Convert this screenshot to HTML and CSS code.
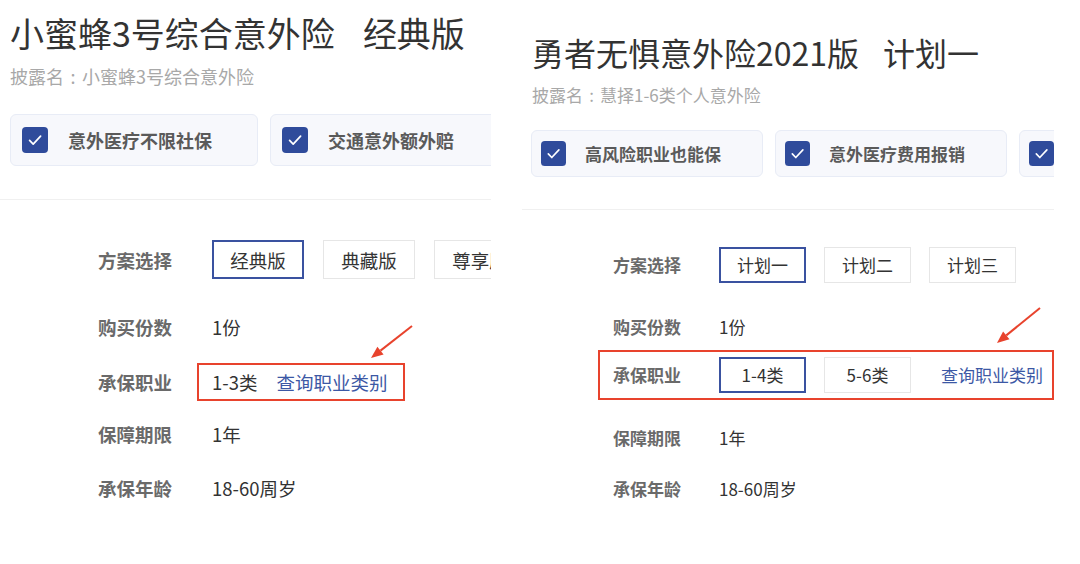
FILE: index.html
```html
<!DOCTYPE html>
<html lang="zh-CN">
<head>
<meta charset="utf-8">
<title>意外险方案对比</title>
<link rel="stylesheet" href="styles.css">
</head>
<body>
<div class="page">
  <section class="panel panel--a">
    <div class="head">
      <h1 class="title">小蜜蜂3号综合意外险<span class="title-plan">经典版</span></h1>
      <p class="disclose">披露名<span class="colon">:</span>小蜜蜂3号综合意外险</p>
      <div class="tags">
        <div class="tag">
          <span class="check"><svg viewBox="0 0 26 26"><rect width="26" height="26" rx="4"/><path d="M7.6 13.4 L11.2 17.2 L18.6 9.2"/></svg></span>
          <span class="tag-text">意外医疗不限社保</span>
        </div>
        <div class="tag">
          <span class="check"><svg viewBox="0 0 26 26"><rect width="26" height="26" rx="4"/><path d="M7.6 13.4 L11.2 17.2 L18.6 9.2"/></svg></span>
          <span class="tag-text">交通意外额外赔</span>
        </div>
      </div>
    </div>
    <div class="divider"></div>
    <div class="specs">
      <div class="row row--plan">
        <span class="label">方案选择</span>
        <div class="opts">
          <span class="opt is-on">经典版</span>
          <span class="opt">典藏版</span>
          <span class="opt">尊享版</span>
        </div>
      </div>
      <div class="row row--qty">
        <span class="label">购买份数</span>
        <span class="value">1份</span>
      </div>
      <div class="row row--job">
        <span class="label">承保职业</span>
        <div class="hl">
          <span class="value">1-3类</span>
          <a class="link">查询职业类别</a>
        </div>
      </div>
      <div class="row row--term">
        <span class="label">保障期限</span>
        <span class="value">1年</span>
      </div>
      <div class="row row--age">
        <span class="label">承保年龄</span>
        <span class="value">18-60周岁</span>
      </div>
    </div>
    <svg class="arrow" viewBox="0 0 50 40">
      <line x1="46" y1="4" x2="14.5" y2="28.6"/>
      <polygon points="5,36 11.4,24.7 17.6,32.5"/>
    </svg>
  </section>

  <section class="panel panel--b">
    <div class="head">
      <h1 class="title">勇者无惧意外险2021版<span class="title-plan">计划一</span></h1>
      <p class="disclose">披露名<span class="colon">:</span>慧择1-6类个人意外险</p>
      <div class="tags">
        <div class="tag">
          <span class="check"><svg viewBox="0 0 26 26"><rect width="26" height="26" rx="4"/><path d="M7.6 13.4 L11.2 17.2 L18.6 9.2"/></svg></span>
          <span class="tag-text">高风险职业也能保</span>
        </div>
        <div class="tag">
          <span class="check"><svg viewBox="0 0 26 26"><rect width="26" height="26" rx="4"/><path d="M7.6 13.4 L11.2 17.2 L18.6 9.2"/></svg></span>
          <span class="tag-text">意外医疗费用报销</span>
        </div>
        <div class="tag">
          <span class="check"><svg viewBox="0 0 26 26"><rect width="26" height="26" rx="4"/><path d="M7.6 13.4 L11.2 17.2 L18.6 9.2"/></svg></span>
        </div>
      </div>
    </div>
    <div class="divider"></div>
    <div class="specs">
      <div class="row row--plan">
        <span class="label">方案选择</span>
        <div class="opts">
          <span class="opt is-on">计划一</span>
          <span class="opt">计划二</span>
          <span class="opt">计划三</span>
        </div>
      </div>
      <div class="row row--qty">
        <span class="label">购买份数</span>
        <span class="value">1份</span>
      </div>
      <div class="row row--job hl">
        <span class="label">承保职业</span>
        <div class="opts">
          <span class="opt is-on">1-4类</span>
          <span class="opt">5-6类</span>
        </div>
        <a class="link">查询职业类别</a>
      </div>
      <div class="row row--term">
        <span class="label">保障期限</span>
        <span class="value">1年</span>
      </div>
      <div class="row row--age">
        <span class="label">承保年龄</span>
        <span class="value">18-60周岁</span>
      </div>
    </div>
    <svg class="arrow" viewBox="0 0 52 44">
      <line x1="48" y1="4" x2="14.3" y2="31.4"/>
      <polygon points="5,39 11.1,27.5 17.5,35.3"/>
    </svg>
  </section>
</div>
</body>
</html>
```

FILE: styles.css
```css
* {
  box-sizing: border-box;
  margin: 0;
  padding: 0;
}

html, body {
  background: #ffffff;
}

body {
  width: 1080px;
  height: 564px;
  overflow: hidden;
  font-family: "Noto Sans CJK SC", "Noto Sans", sans-serif;
  color: #333333;
}

.page {
  display: flex;
  gap: 31px;
}

.panel {
  position: relative;
  flex: none;
  height: 564px;
  overflow: hidden;
}

.panel--a { width: 491px; }
.panel--b { width: 532px; }

/* ---------- head ---------- */
.title {
  font-weight: 400;
  color: #333333;
  white-space: nowrap;
}

.disclose {
  color: #a8a8a8;
  white-space: nowrap;
}

.colon {
  display: inline-block;
  width: 1em;
  text-align: center;
}

.tags {
  display: flex;
  gap: 12px;
}

.tag {
  flex: none;
  display: flex;
  align-items: center;
  background: #f7f8fc;
  border: 1px solid #e8ecf6;
  border-radius: 6px;
}

.check {
  display: block;
  flex: none;
}

.check svg {
  display: block;
  width: 100%;
  height: 100%;
}

.check rect {
  fill: #2f4b9b;
}

.check path {
  fill: none;
  stroke: #ffffff;
  stroke-width: 1.7;
  stroke-linecap: round;
  stroke-linejoin: round;
}

.tag-text {
  font-weight: 600;
  color: #5a5a5a;
  white-space: nowrap;
}

.divider {
  height: 1px;
  background: #f0f0f0;
}

/* ---------- specs ---------- */
.specs {
  display: flex;
  flex-direction: column;
}

.row {
  display: flex;
  align-items: center;
  white-space: nowrap;
}

.label {
  flex: none;
  font-weight: 600;
  color: #6a6a6a;
}

.value {
  color: #333333;
}

.opts {
  display: flex;
}

.opt {
  flex: none;
  display: flex;
  align-items: center;
  justify-content: center;
  border: 1px solid #e6e6e6;
  color: #333333;
  background: #ffffff;
}

.opt.is-on {
  border: 2px solid #3a52a0;
}

.link {
  color: #3c58a5;
  text-decoration: none;
}

.hl {
  border: 2px solid #e8432d;
}

.arrow {
  position: absolute;
  pointer-events: none;
}

.arrow line {
  stroke: #e8432d;
  stroke-width: 2;
}

.arrow polygon {
  fill: #e8432d;
}

/* ---------- panel A (left) ---------- */
.panel--a .head {
  padding: 12px 0 33px 10px;
}

.panel--a .title {
  font-size: 34px;
  line-height: 42px;
}

.panel--a .title-plan {
  margin-left: 28px;
}

.panel--a .disclose {
  margin-top: 9px;
  font-size: 18px;
  line-height: 26px;
}

.panel--a .tags {
  margin-top: 25px;
}

.panel--a .tag {
  width: 248px;
  height: 52px;
  padding-left: 11px;
  gap: 20px;
}

.panel--a .check {
  width: 26px;
  height: 26px;
}

.panel--a .tag-text {
  font-size: 18px;
}

.panel--a .specs {
  padding-left: 98px;
  margin-top: 40px;
  font-size: 18.5px;
  line-height: 26px;
}

.panel--a .label {
  width: 114px;
}

.panel--a .opts {
  gap: 19px;
}

.panel--a .opt {
  width: 92px;
  height: 39px;
}

.panel--a .row--qty { margin-top: 35px; }
.panel--a .row--job { margin-top: 23px; }
.panel--a .row--term { margin-top: 20px; }
.panel--a .row--age { margin-top: 28px; }

.panel--a .hl {
  display: flex;
  align-items: center;
  gap: 19px;
  margin-left: -15px;
  padding: 4px 16px 4px 13px;
}

.panel--a .arrow {
  left: 366px;
  top: 322px;
  width: 50px;
  height: 40px;
}

/* ---------- panel B (right) ---------- */
.panel--b .head {
  padding: 32px 0 32px 10px;
}

.panel--b .title {
  font-size: 32px;
  line-height: 40px;
}

.panel--b .title-plan {
  margin-left: 24px;
}

.panel--b .disclose {
  margin-top: 11px;
  font-size: 17px;
  line-height: 24px;
}

.panel--b .tags {
  margin-top: 23px;
  margin-left: -1px;
}

.panel--b .tag {
  width: 232px;
  height: 47px;
  padding-left: 9px;
  gap: 19px;
}

.panel--b .check {
  width: 25px;
  height: 25px;
}

.panel--b .tag-text {
  font-size: 17px;
}

.panel--b .specs {
  padding-left: 91px;
  margin-top: 37px;
  font-size: 17px;
  line-height: 24px;
}

.panel--b .label {
  width: 106px;
}

.panel--b .opts {
  gap: 18px;
}

.panel--b .opt {
  width: 87px;
  height: 36px;
}

.panel--b .row--qty { margin-top: 32px; }
.panel--b .row--job { margin-top: 11px; }
.panel--b .row--term { margin-top: 26px; }
.panel--b .row--age { margin-top: 27px; }

.panel--b .hl {
  margin-left: -15px;
  padding: 5px 0 5px 13px;
}

.panel--b .hl .link {
  margin-left: 30px;
}

.panel--b .arrow {
  left: 470px;
  top: 304px;
  width: 52px;
  height: 44px;
}
```
